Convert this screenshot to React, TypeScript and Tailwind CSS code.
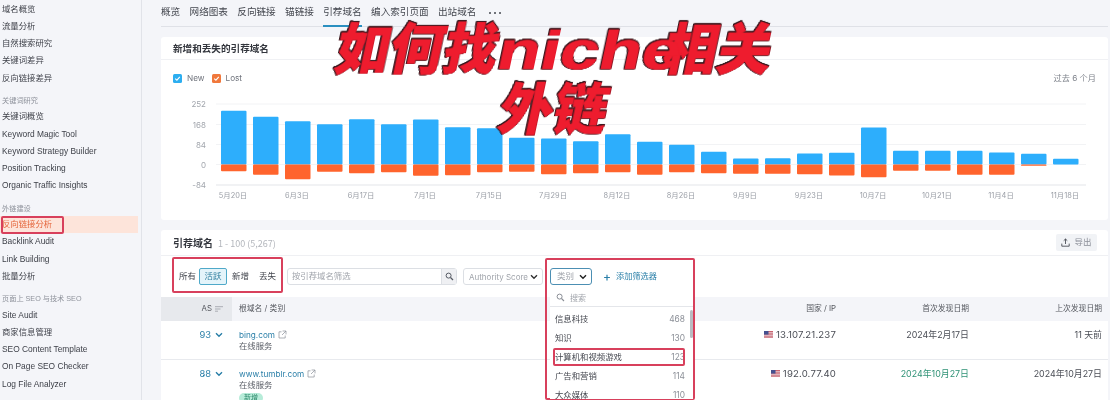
const sideGroups = [
  { items: ["域名概览", "流量分析", "自然搜索研究", "关键词差异", "反向链接差异"] },
  { title: "关键词研究", items: ["关键词概览", "Keyword Magic Tool", "Keyword Strategy Builder", "Position Tracking", "Organic Traffic Insights"] },
  { title: "外链建设", items: ["反向链接分析", "Backlink Audit", "Link Building", "批量分析"] },
  { title: "页面上 SEO 与技术 SEO", items: ["Site Audit", "商家信息管理", "SEO Content Template", "On Page SEO Checker", "Log File Analyzer"] },
];

const tabs = ["概览", "网络图表", "反向链接", "锚链接", "引荐域名", "编入索引页面", "出站域名"];

// height of the blue part / orange part of each bar, in px
const bars = [
  [53.7, 6.7], [47.7, 10.3], [43.3, 14.7], [40.3, 7.3], [45.3, 8.7], [40.3, 7.7], [45, 11.3], [37.3, 10.7], [36.3, 7.7],
  [26.7, 7.3], [26, 9.7], [23.3, 8.7], [30.3, 7.7], [22.7, 10.3], [19.7, 7.7], [12.7, 8.7], [6, 9.3], [6.3, 9.3],
  [11, 9.7], [11.7, 11], [37, 12.7], [13.7, 6.3], [13.7, 6.3], [13.7, 10.3], [12, 10.3], [10.7, 1.3], [5.7, 0],
];
const gridLines = [{ y: 17, l: "252" }, { y: 37.5, l: "168" }, { y: 57.5, l: "84" }, { y: 77.5, l: "0" }, { y: 98, l: "-84" }];
const xLabels = ["5月20日", "6月3日", "6月17日", "7月1日", "7月15日", "7月29日", "8月12日", "8月26日", "9月9日", "9月23日", "10月7日", "10月21日", "11月4日", "11月18日"];

const Check = ({ color }: { color: string }) => (
  <svg width="9" height="9" viewBox="0 0 9 9">
    <rect width="9" height="9" rx="1.5" fill={color} />
    <path d="M2.2 4.6 3.9 6.2 6.8 2.9" fill="none" stroke="#fff" strokeWidth="1.1" />
  </svg>
);

const Chevron = ({ className = "" }: { className?: string }) => (
  <svg className={className} width="8" height="6" viewBox="0 0 8 6">
    <path d="M1 1.2 4 4.2 7 1.2" fill="none" stroke="currentColor" strokeWidth="1.4" />
  </svg>
);

const Ext = () => (
  <svg width="9" height="9" viewBox="0 0 9 9" className="text-[#8a8f99]">
    <path d="M3.5 1.8H1v6.2h6.2V5.5M4.6 1h3.4v3.4M8 1 4 5" fill="none" stroke="currentColor" strokeWidth="0.7" />
  </svg>
);

const Flag = () => (
  <svg width="9" height="7" viewBox="0 0 9 7">
    <rect width="9" height="7" fill="#c9646f" />
    <path d="M0 1.5h9M0 3h9M0 4.5h9M0 6h9" stroke="#efe9ee" strokeWidth="0.6" />
    <rect width="4.5" height="3.6" fill="#44508f" />
  </svg>
);

function Sidebar() {
  return (
    <aside className="w-[142px] h-[400px] shrink-0 overflow-hidden border-r border-[#e1e3e9] pr-[3px] font-['Liberation_Sans','Noto_Sans_CJK_SC',sans-serif] text-[8.4px] text-[#3c3f47]">
      {sideGroups.map((g, i) => (
        <div key={i} className={i === 0 ? "mt-[0.5px]" : "mt-[5px]"}>
          {g.title && <div className="h-[16.3px] pl-[2px] pt-[1px] text-[7.2px] leading-[16px] text-[#8e929b]">{g.title}</div>}
          {g.items.map((t) => (
            <div
              key={t}
              className={`h-[17.3px] pl-[2px] leading-[17.3px] whitespace-nowrap ${t === "反向链接分析" ? "bg-[#fde4da] text-[#e4643a]" : ""}`}
            >
              {t}
            </div>
          ))}
        </div>
      ))}
    </aside>
  );
}

function Tabs() {
  return (
    <nav className="flex h-[27px] items-stretch gap-[9.4px] border-b border-[#dfe1e7] text-[9.6px] text-[#44474f]">
      {tabs.map((t) => (
        <div
          key={t}
          className={`flex items-center whitespace-nowrap pb-[1px] ${t === "引荐域名" ? "border-b-[2px] border-[#2a8fc0] -mb-[1px]" : ""}`}
        >
          {t}
        </div>
      ))}
      <div className="ml-[3px] flex items-center gap-[2.5px]">
        <span className="size-[2.5px] rounded-full bg-[#44474f]" />
        <span className="size-[2.5px] rounded-full bg-[#44474f]" />
        <span className="size-[2.5px] rounded-full bg-[#44474f]" />
      </div>
    </nav>
  );
}

function Chart() {
  const x0 = 60;
  return (
    <svg width="947" height="116" viewBox="0 0 947 116" className="block">
      {gridLines.map((g) => (
        <g key={g.l}>
          <line x1="55" x2="925" y1={g.y} y2={g.y} stroke={g.l === "-84" ? "#e3e5ea" : "#f2f3f5"} strokeWidth={g.l === "-84" ? 1.2 : 1} />
          <text x="45" y={g.y + 3} textAnchor="end" fontSize="8" fill="#a2a6ad">
            {g.l}
          </text>
        </g>
      ))}
      {bars.map(([a, b], i) => (
        <g key={i}>
          <rect x={x0 + i * 32} y={77.5 - a} width="25.5" height={a} rx="1" fill="#2daefc" />
          <rect x={x0 + i * 32} y={77.5} width="25.5" height={b} rx="1" fill="#ff642d" />
        </g>
      ))}
      {xLabels.map((t, i) => (
        <text key={t} x={72 + i * 64} y="111" textAnchor="middle" fontSize="7.4" fill="#9a9ea6">
          {t}
        </text>
      ))}
    </svg>
  );
}

function TrendCard() {
  return (
    <section className="mt-[10px] h-[183px] rounded-[3px] bg-white">
      <h2 className="flex h-[23px] items-center border-b border-[#f0f1f4] pl-[12px] text-[9.6px] font-bold text-[#33363d] font-['Noto_Sans_CJK_SC',sans-serif]">
        新增和丢失的引荐域名
      </h2>
      <div className="flex h-[17px] mt-[10px] items-center justify-between pl-[12px] pr-[12px] text-[8.2px] text-[#6f737c]">
        <div className="flex items-center">
          <Check color="#2daef0" />
          <span className="ml-[5px]">New</span>
          <span className="ml-[7px]">
            <Check color="#f0783c" />
          </span>
          <span className="ml-[5px]">Lost</span>
        </div>
        <span className="text-[#7d818a]">过去 6 个月</span>
      </div>
      <Chart />
    </section>
  );
}

function Segment() {
  return (
    <div className="flex h-[17px] w-[106px] items-center text-[8.5px] text-[#44474f]">
      <span className="w-[23px] text-center">所有</span>
      <span className="flex h-full w-[28px] items-center justify-center rounded-[2px] border border-[#4fa9c9] bg-[#e4f4fa] text-[#2f7f9f]">活跃</span>
      <span className="w-[27px] text-center">新增</span>
      <span className="w-[27px] text-center">丢失</span>
    </div>
  );
}

function Filters() {
  return (
    <div className="flex h-[41px] items-center pl-[15px]">
      <Segment />
      <div className="ml-[5px] flex h-[17px] w-[170px] items-center rounded-[3px] border border-[#dcdfe4] pl-[4px] text-[8.4px] text-[#a0a4ab]">
        <span className="flex-1">按引荐域名筛选</span>
        <span className="flex h-full w-[15px] items-center justify-center border-l border-[#dcdfe4] bg-[#eff0f3]">
          <svg width="9" height="9" viewBox="0 0 9 9">
            <circle cx="3.6" cy="3.6" r="2.5" fill="none" stroke="#555a63" strokeWidth="1" />
            <path d="M5.5 5.5 8 8" stroke="#555a63" strokeWidth="1.2" />
          </svg>
        </span>
      </div>
      <div className="ml-[6px] flex h-[17px] w-[80px] items-center justify-between rounded-[3px] border border-[#dcdfe4] pl-[5px] pr-[4px] text-[8px] text-[#a0a4ab]">
        <span className="whitespace-nowrap">Authority Score</span>
        <Chevron className="text-[#333]" />
      </div>
    </div>
  );
}

const colClass = "grid grid-cols-[71px_451px_153px_133px_133px]";

function Row({ as, domain, ip, first, last, fresh, h }: { as: string; domain: string; ip: string; first: string; last: string; fresh?: boolean; h: string }) {
  return (
    <div className={`${colClass} ${h} items-start border-b border-[#e8eaee] pt-[6.5px] text-[8.9px]`}>
      <div className="flex items-center justify-end gap-[4px] pr-[9px] text-[9.4px] leading-[14px] text-[#2a7fa8]">
        {as}
        <Chevron className="text-[#2a7fa8]" />
      </div>
      <div className="pl-[7px]">
        <div className="flex items-center gap-[3px] text-[8.2px] leading-[14px] text-[#2a7fa8]">
          {domain}
          <Ext />
        </div>
        <div className="mt-[-1.5px] text-[8.4px] leading-[12px] text-[#5b5f67]">在线服务</div>
        {fresh && <span className="mt-[1.5px] block h-[10px] w-[24px] rounded-full bg-[#b7ecd9] text-center text-[7px] leading-[10px] text-[#2e8a6c]">新增</span>}
      </div>
      <div className="flex items-center justify-end gap-[3px] text-[9.6px] leading-[14px] text-[#4b4e56] tracking-[0.15px]">
        <Flag />
        {ip}
      </div>
      <div className={`text-right leading-[14px] ${fresh ? "text-[#2f9276]" : "text-[#4b4e56]"}`}>{first}</div>
      <div className="whitespace-nowrap text-right leading-[14px] text-[#4b4e56]">{last}</div>
    </div>
  );
}

function DomainsCard() {
  return (
    <section className="mt-[10px] h-[170px] overflow-hidden rounded-t-[3px] bg-white">
      <div className="flex h-[26px] items-center justify-between border-b border-[#eff0f3] pl-[12px] pr-[11px]">
        <div className="flex items-baseline gap-[5px] font-['Noto_Sans_CJK_SC',sans-serif]">
          <span className="text-[10px] font-bold text-[#33363d]">引荐域名</span>
          <span className="text-[9px] text-[#b3b6bc]">1 - 100 (5,267)</span>
        </div>
        <button className="flex h-[17px] w-[41px] items-center justify-center gap-[4px] rounded-[2px] bg-[#f1f3f6] text-[8.5px] text-[#8b8f98]">
          <svg width="9" height="9" viewBox="0 0 9 9">
            <path d="M4.5 6V1M2.7 2.7 4.5 1l1.8 1.7M.8 5.6v2.6h7.4V5.6" fill="none" stroke="#4b4e56" strokeWidth="0.9" />
          </svg>
          导出
        </button>
      </div>
      <Filters />
      <div className={`${colClass} h-[24px] items-center bg-[#f4f5f9] text-[7.8px] text-[#55585f]`}>
        <div className="flex h-full items-center justify-end gap-[3px] bg-[#e7e9ed] pr-[9px]">
          AS
          <svg width="8" height="6" viewBox="0 0 8 6">
            <path d="M0 .7h8M0 3h5.5M0 5.2h3" stroke="#9a9da5" strokeWidth="0.8" />
          </svg>
        </div>
        <div className="pl-[7px]">根域名 / 类别</div>
        <div className="text-right">国家 / IP</div>
        <div className="text-right">首次发现日期</div>
        <div className="text-right">上次发现日期</div>
      </div>
      <Row as="93" domain="bing.com" ip="13.107.21.237" first="2024年2月17日" last="11 天前" h="h-[39px]" />
      <Row as="88" domain="www.tumblr.com" ip="192.0.77.40" first="2024年10月27日" last="2024年10月27日" fresh h="h-[41px]" />
    </section>
  );
}

function CategoryMenu() {
  const rows = [["信息科技", "468"], ["知识", "130"], ["计算机和视频游戏", "123"], ["广告和营销", "114"], ["大众媒体", "110"]];
  return (
    <div className="absolute left-[545px] top-[258px] h-[142px] w-[150px] rounded-[2px] border-2 border-[#d8405c] text-[#44474f]">
      <div className="ml-[3px] mt-[8px] flex items-center">
        <span className="flex h-[17px] w-[42px] items-center justify-between rounded-[3px] border border-[#4c8fb3] pl-[6px] pr-[4px] text-[8.5px] text-[#a0a4ab]">
          类别
          <Chevron className="text-[#222]" />
        </span>
        <span className="ml-[11px] text-[12px] font-medium leading-none text-[#2a7fa8]">+</span>
        <span className="ml-[5px] whitespace-nowrap text-[8.2px] text-[#2a7fa8]">添加筛选器</span>
      </div>
      <div className="relative ml-[3px] mt-[2px] h-[112px] w-[143px] bg-white">
        <div className="flex h-[20px] items-center gap-[5px] border-b border-[#e4e6ea] pl-[6px] pt-[2px] text-[8px] text-[#a0a4ab]">
          <svg width="9" height="9" viewBox="0 0 9 9">
            <circle cx="3.6" cy="3.6" r="2.5" fill="none" stroke="#8a8e96" strokeWidth="1" />
            <path d="M5.5 5.5 8 8" stroke="#8a8e96" strokeWidth="1.1" />
          </svg>
          搜索
        </div>
        <div className="pt-[3px]">
          {rows.map(([t, n]) => (
            <div key={t} className="flex h-[19px] items-center justify-between pl-[5px] pr-[8px] text-[8.4px]">
              <span className="whitespace-nowrap">{t}</span>
              <span className="text-[#8c9098]">{n}</span>
            </div>
          ))}
        </div>
        <span className="absolute right-0 top-[23px] h-[28px] w-[3px] rounded-full bg-[#b9bcc2]" />
      </div>
    </div>
  );
}

const titleLine =
  "whitespace-nowrap -skew-x-[12deg] text-[#ee1c2e] [-webkit-text-stroke:0.7px_#ee1c2e] [filter:drop-shadow(0.8px_0_0_#3a1a20)_drop-shadow(-0.8px_0_0_#3a1a20)_drop-shadow(0_0.8px_0_#3a1a20)_drop-shadow(0_-0.8px_0_#3a1a20)]";

export default function App() {
  return (
    <div className="relative flex h-[400px] w-[1110px] overflow-hidden bg-[#f4f5f9] font-['Inter','Noto_Sans_CJK_SC',sans-serif] blur-[0.35px]">
      <Sidebar />
      <main className="min-w-0 flex-1 pl-[19px] pr-[2px]">
        <Tabs />
        <TrendCard />
        <DomainsCard />
      </main>

      {/* red annotations drawn over the screenshot */}
      <CategoryMenu />
      <span className="absolute left-[1px] top-[216px] h-[18px] w-[63px] rounded-[2px] border-2 border-[#d8405c]" />
      <span className="absolute left-[172px] top-[257px] h-[36px] w-[111px] rounded-[2px] border-2 border-[#d8405c]" />
      <span className="absolute left-[553px] top-[348px] h-[18px] w-[132px] rounded-[2px] border-2 border-[#d8405c]" />

      {/* big title pasted on top */}
      <div className="absolute left-[338px] top-[18px] flex w-[434px] flex-col items-center font-['Noto_Sans_CJK_SC',sans-serif] text-[54px] font-black leading-[56px]">
        <div className={titleLine}>
          如何找
          <span className="inline-block w-[166px] origin-left scale-x-[1.3] font-['Liberation_Sans',sans-serif] font-bold">niche</span>
          相关
        </div>
        <div className={titleLine}>外链</div>
      </div>
    </div>
  );
}
